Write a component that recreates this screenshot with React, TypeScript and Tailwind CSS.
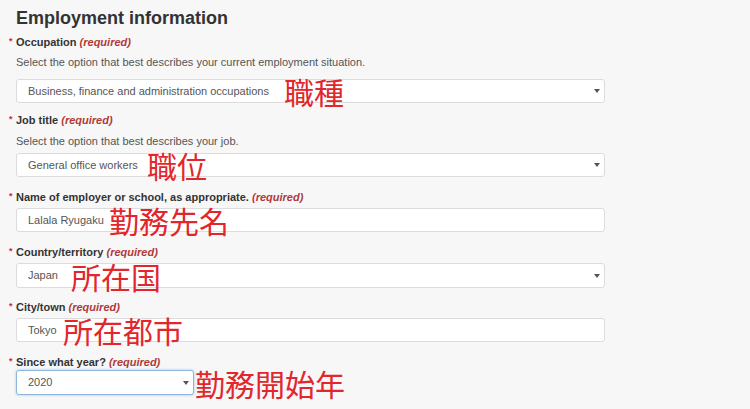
import React from "react";

type Field = {
  label: string;
  desc?: string;
  value: string;
  kind: "select" | "input";
  note: string;
  noteLeft: string;
  labelGap: string;
  descGap?: string;
  fieldGap: string;
  height: string;
  width?: string;
  focus?: boolean;
};

const fields: Field[] = [
  {
    label: "Occupation",
    desc: "Select the option that best describes your current employment situation.",
    value: "Business, finance and administration occupations",
    kind: "select",
    note: "職種",
    noteLeft: "left-[268px]",
    labelGap: "mt-[6px]",
    descGap: "mt-[6px]",
    fieldGap: "mt-[10px]",
    height: "h-[24px]",
  },
  {
    label: "Job title",
    desc: "Select the option that best describes your job.",
    value: "General office workers",
    kind: "select",
    note: "職位",
    noteLeft: "left-[131px]",
    labelGap: "mt-[10px]",
    descGap: "mt-[7px]",
    fieldGap: "mt-[5px]",
    height: "h-[24px]",
  },
  {
    label: "Name of employer or school, as appropriate.",
    value: "Lalala Ryugaku",
    kind: "input",
    note: "勤務先名",
    noteLeft: "left-[93px]",
    labelGap: "mt-[13px]",
    fieldGap: "mt-[4px]",
    height: "h-[24px]",
  },
  {
    label: "Country/territory",
    value: "Japan",
    kind: "select",
    note: "所在国",
    noteLeft: "left-[55px]",
    labelGap: "mt-[13px]",
    fieldGap: "mt-[4px]",
    height: "h-[25px]",
  },
  {
    label: "City/town",
    value: "Tokyo",
    kind: "input",
    note: "所在都市",
    noteLeft: "left-[47px]",
    labelGap: "mt-[12px]",
    fieldGap: "mt-[4px]",
    height: "h-[24px]",
  },
  {
    label: "Since what year?",
    value: "2020",
    kind: "select",
    note: "勤務開始年",
    noteLeft: "left-[179px]",
    labelGap: "mt-[13px]",
    fieldGap: "mt-[1px]",
    height: "h-[25px]",
    width: "w-[178px]",
    focus: true,
  },
];

export default function App() {
  return (
    <div
      className="min-h-[409px] w-full bg-[#f7f7f7] px-4 pt-[7px] text-[#333]"
      style={{ fontFamily: '"Liberation Sans", Arial, "Noto Sans CJK JP", sans-serif' }}
    >
      <h2 className="text-[18px] leading-[22px] font-bold text-[#333]">Employment information</h2>

      {fields.map((f) => (
        <div key={f.label}>
          <div className={`${f.labelGap} relative text-[11px] leading-[14px] font-bold`}>
            <span className="absolute -left-[7px] top-[-1px] text-[9px] text-[#c9302c]">*</span>
            {f.label}{" "}
            <em className="font-bold text-[#b03a37]">(required)</em>
          </div>
          {f.desc && (
            <div className={`${f.descGap} text-[11px] leading-[14px] text-[#555]`}>{f.desc}</div>
          )}
          <div className={`${f.fieldGap} relative`}>
            <div
              className={`flex ${f.height} items-center justify-between rounded-[3px] border bg-white pl-[11px] pr-[4px] text-[11px] text-[#555] ${
                f.width ?? "w-[589px]"
              } ${
                f.focus
                  ? "border-[#8cb6dc] shadow-[0_0_3px_rgba(102,175,233,0.6)]"
                  : "border-[#dcdcdc]"
              }`}
            >
              <span>{f.value}</span>
              {f.kind === "select" && (
                <span className="h-0 w-0 border-x-[3px] border-t-[4px] border-x-transparent border-t-[#555]" />
              )}
            </div>
            <span
              className={`absolute ${f.noteLeft} top-1/2 -translate-y-1/2 text-[30px] leading-[24px] whitespace-nowrap text-[#e2262b]`}
              style={{ fontFamily: '"Noto Sans CJK JP", sans-serif' }}
            >
              {f.note}
            </span>
          </div>
        </div>
      ))}
    </div>
  );
}
